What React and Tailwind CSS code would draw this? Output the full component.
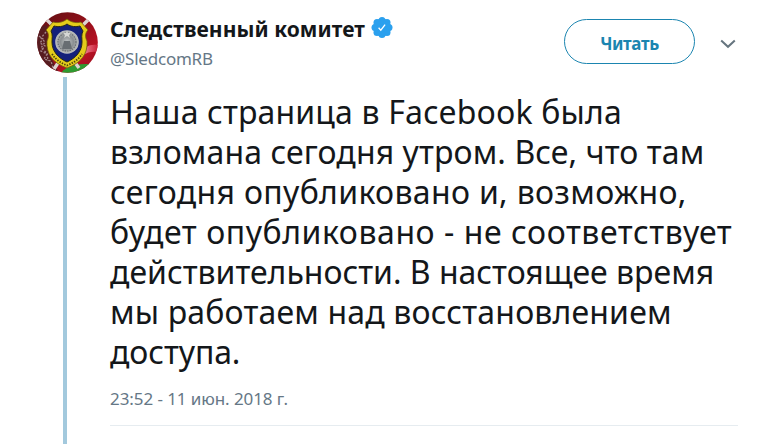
const lines = [
  ["Наша страница в Facebook была", "tracking-[0.15px]"],
  ["взломана сегодня утром. Все, что там", "tracking-[0.1px]"],
  ["сегодня опубликовано и, возможно,", "tracking-[0.33px]"],
  ["будет опубликовано - не соответствует", "tracking-[0.56px]"],
  ["действительности. В настоящее время", "tracking-[-0.01px]"],
  ["мы работаем над восстановлением", "tracking-[0.17px]"],
  ["доступа.", "tracking-[-0.1px]"],
];

function Avatar() {
  return (
    <svg viewBox="0 0 61 61" className="block size-[61px] shrink-0">
      <defs>
        <clipPath id="round"><circle cx="30.5" cy="30.5" r="30.3" /></clipPath>
        <linearGradient id="flag" x1="0" y1="0" x2="1" y2="1">
          <stop offset="0" stopColor="#5c1013" />
          <stop offset=".45" stopColor="#8f0f18" />
          <stop offset=".75" stopColor="#b81224" />
          <stop offset="1" stopColor="#8c0c1a" />
        </linearGradient>
        <linearGradient id="shine" x1="0" y1="0" x2="1" y2="0">
          <stop offset="0" stopColor="#f08a98" />
          <stop offset="1" stopColor="#c91d36" />
        </linearGradient>
        <radialGradient id="silver">
          <stop offset="0" stopColor="#c3c6c7" />
          <stop offset=".55" stopColor="#8b8f92" />
          <stop offset="1" stopColor="#bfc1c0" />
        </radialGradient>
      </defs>
      <g clipPath="url(#round)">
        <rect width="61" height="61" fill="url(#flag)" />
        <path d="M0 16 10 13 11 40 22 61H0z" fill="#561c20" />
        <path d="M2 24l4 3-3 4 5 3-4 5 6 3-3 5 7 2 2 7M9 20l-5 6 4 4-4 6 6 5 1 8" fill="none" stroke="#a48589" strokeWidth="1.3" strokeDasharray="2 1.6" />
        <path d="M47 36c5-3 9-4 14-3v7c-6-1-10 0-15 3z" fill="url(#shine)" />
        <path d="M24 61c6-8 16-9 29-9l-9 11z" fill="#2f9a30" />
        <path d="M9 7 18 16M51 8 42 17M17 57l6-9M42 56l-6-8" stroke="#ddd3d0" strokeWidth="3.4" />
        <path d="M30 7c5 4 10 4 14 3l7 8c-3 3-3 7-1 11 1 13-6 22-20 27C16 51 9 42 10 29c2-4 2-8-1-11l7-8c4 1 9 1 14-3z" fill="#e4cc1b" stroke="#75620d" strokeWidth=".8" />
        <path d="M30 12c4 3 9 3 13 2l3 5c-2 4-1 7-1 11 0 9-6 16-15 20-9-4-15-11-15-20 0-4 1-7-1-11l3-5c4 1 9 1 13-2z" fill="#14207a" stroke="#282817" strokeWidth="1" />
        <circle cx="30" cy="30" r="11.8" fill="url(#silver)" />
        <circle cx="30" cy="30" r="9" fill="none" stroke="#6a6f73" strokeWidth="1.2" strokeDasharray="1.5 1" />
        <path d="m30 18.5 1 2.5h3l-2 2 1 3-3-2-3 2 1-3-2-2h3z" fill="#d6d7d5" />
        <path d="M27 29h6l2 8h-10z" fill="#686d72" />
        <path d="M15 42c4 6 9 9 15 11.5 6-2.5 11-5.5 15-11.5" fill="none" stroke="#4c430c" strokeWidth="1.8" strokeDasharray="1.4 1.3" />
      </g>
    </svg>
  );
}

function VerifiedBadge() {
  return (
    <svg viewBox="0 0 22 22" className="block size-[22px] shrink-0">
      <g fill="#2ba0ee">
        <circle cx="11" cy="11.5" r="9" />
        <circle cx="11" cy="4.5" r="3.5" /><circle cx="16" cy="6.5" r="3.5" />
        <circle cx="18" cy="11.5" r="3.5" /><circle cx="16" cy="16.500" r="3.5" />
        <circle cx="11" cy="18.5" r="3.5" /><circle cx="6" cy="16.5" r="3.5" />
        <circle cx="4" cy="11.5" r="3.5" /><circle cx="6" cy="6.5" r="3.5" />
      </g>
      <path d="m7.6 11.8 2.2 2.4 4.3-5.6" fill="none" stroke="#fff" strokeWidth="1.3" />
    </svg>
  );
}

export default function App() {
  return (
    <main className="flex h-[444px] w-[772px] overflow-hidden bg-white font-['Noto_Sans','Open_Sans',sans-serif] text-[#14171a]">
      <aside className="ml-[37px] mr-[12px] flex w-[61px] shrink-0 flex-col pt-[12px]">
        <Avatar />
        <div className="ml-[26px] mt-[4px] w-[4px] flex-1 bg-[#a3c9dd]" />
      </aside>
      <article className="flex w-[628px] flex-col">
        <header className="flex h-[92px]">
          <div className="flex-1 pt-[14px]">
            <div className="flex h-[30px] items-start gap-[6px] whitespace-nowrap text-[21px] font-bold leading-[30px]">
              <span className="tracking-[0.05px]">Следственный комитет</span>
              <span className="mt-[2px]"><VerifiedBadge /></span>
            </div>
            <div className="mt-[3px] text-[17px] leading-6 tracking-[-0.22px] text-[#657786]">@SledcomRB</div>
          </div>
          <button className="mt-[19px] h-[45px] w-[131px] rounded-full border border-[#1b85b0] pt-[5px] text-[17px] font-bold leading-6 tracking-[-0.36px] text-[#1b85b0]">Читать</button>
          <svg viewBox="0 0 16 10" className="ml-[25px] mr-[2px] mt-[39px] block h-[10px] w-[16px]">
            <path d="m1.2 1.4 6.8 6.4 6.8-6.4" fill="none" stroke="#66757f" strokeWidth="2" />
          </svg>
        </header>
        <p className="text-[32px] leading-[40px]">
          {lines.map(([text, tracking]) => (
            <span key={text} className={`block whitespace-nowrap ${tracking}`}>{text}</span>
          ))}
        </p>
        <time className="mt-[15px] text-[17px] leading-6 tracking-[-0.08px] text-[#657786]">23:52 - 11 июн. 2018 г.</time>
        <hr className="mt-[14px] border-t border-[#e6ecf0]" />
      </article>
    </main>
  );
}
